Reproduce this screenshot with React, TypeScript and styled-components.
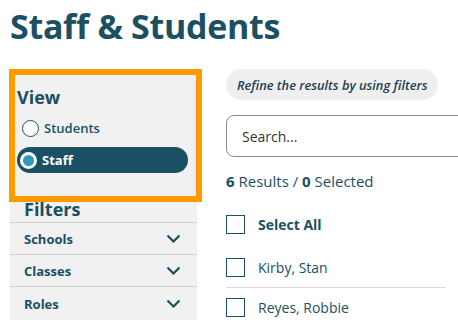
import { useState } from "react";
import styled, { createGlobalStyle } from "styled-components";

const TEAL = "#1b4f62";

const GlobalStyle = createGlobalStyle`
  html, body {
    margin: 0;
    padding: 0;
    background: #fff;
    overflow: hidden;
  }
  body {
    font-family: "Open Sans", "Noto Sans", sans-serif;
    color: ${TEAL};
  }
`;

// STYLED COMPONENTS
const Page = styled.div`
  box-sizing: border-box;
  padding: 6px 0 0 10px;
  width: 458px;
  height: 329px;
  overflow: hidden;
`;

const Title = styled.h1`
  margin: 0;
  font-size: 34px;
  font-weight: 700;
  line-height: 40px;
  color: ${TEAL};
  letter-spacing: -0.3px;
`;

const Layout = styled.div`
  display: flex;
  align-items: flex-start;
  gap: 29px;
  margin-top: 23px;
`;

const Sidebar = styled.aside`
  width: 187px;
  background: #f1f1f1;
  flex-shrink: 0;
`;

const ViewBox = styled.div`
  position: relative;
  z-index: 1;
  margin: 0 -5px 0 -1px;
  border: 6px solid #ff9900;
  background: #f1f1f1;
  padding: 9px 8px 23px 2px;
  display: flex;
  flex-direction: column;
`;

const SectionTitle = styled.h2`
  margin: 0;
  font-size: 18px;
  font-weight: 700;
  line-height: 26px;
  color: ${TEAL};
`;

const RadioRow = styled.label<{ $checked?: boolean }>`
  display: flex;
  align-items: center;
  gap: 5px;
  height: 26px;
  padding-left: ${(p) => (p.$checked ? "3px" : "5px")};
  margin-top: ${(p) => (p.$checked ? "6px" : "5px")};
  border-radius: 13px;
  background: ${(p) => (p.$checked ? TEAL : "transparent")};
  color: ${(p) => (p.$checked ? "#fff" : TEAL)};
  font-size: 13px;
  font-weight: ${(p) => (p.$checked ? 700 : 600)};
  cursor: pointer;
`;

const RadioDot = styled.span<{ $checked?: boolean }>`
  box-sizing: border-box;
  width: 17px;
  height: 17px;
  border-radius: 50%;
  background: ${(p) => (p.$checked ? "#3399bb" : "#fff")};
  border: ${(p) => (p.$checked ? "3px solid #fff" : `1.5px solid ${TEAL}`)};
  flex-shrink: 0;
`;

const FiltersTitle = styled(SectionTitle)`
  margin-top: -5px;
  padding-left: 14px;
  line-height: 25px;
`;

const FilterRow = styled.button`
  display: flex;
  align-items: center;
  justify-content: space-between;
  width: 100%;
  height: 32px;
  padding: 0 16px 0 14px;
  border: none;
  border-top: 1px solid #cfcfcf;
  background: transparent;
  font-family: inherit;
  font-size: 13px;
  font-weight: 700;
  color: ${TEAL};
  cursor: pointer;
  &:last-child {
    height: 34px;
  }
`;

const Main = styled.main`
  flex: 1;
  min-width: 0;
  display: flex;
  flex-direction: column;
`;

const Hint = styled.div`
  align-self: flex-start;
  height: 31px;
  display: flex;
  align-items: center;
  padding: 0 11px;
  border-radius: 16px;
  background: #efefef;
  font-size: 12.8px;
  font-weight: 600;
  font-style: italic;
  color: #22404e;
`;

const SearchInput = styled.input`
  box-sizing: border-box;
  margin-top: 15px;
  width: 260px;
  flex-shrink: 0;
  height: 42px;
  padding: 0 15px;
  border: 1px solid #8c8c8c;
  border-radius: 8px;
  font-family: inherit;
  font-size: 14px;
  color: #333;
  outline: none;
  &::placeholder {
    color: #333;
  }
`;

const Summary = styled.div`
  margin-top: 14px;
  font-size: 15px;
  line-height: 20px;
  color: ${TEAL};
  b {
    font-weight: 700;
  }
`;

const List = styled.ul`
  list-style: none;
  margin: 14px 0 0;
  padding: 0;
  width: 220px;
`;

const Item = styled.li<{ $divider?: boolean; $bold?: boolean; $gapTop?: number }>`
  display: flex;
  align-items: center;
  gap: 13px;
  height: 39px;
  margin-top: ${(p) => p.$gapTop ?? 0}px;
  border-top: ${(p) => (p.$divider ? "1.5px solid #d8d8d8" : "none")};
  font-size: 14px;
  font-weight: ${(p) => (p.$bold ? 700 : 400)};
  color: ${TEAL};
`;

const Box = styled.span`
  box-sizing: border-box;
  width: 19px;
  height: 19px;
  border: 1.5px solid ${TEAL};
  background: #fff;
  flex-shrink: 0;
`;

function Chevron() {
  return (
    <svg width="15" height="9" viewBox="0 0 15 9" fill="none">
      <path d="M1.5 1.5L7.5 7.5L13.5 1.5" stroke={TEAL} strokeWidth="2.2" />
    </svg>
  );
}

export default function App() {
  const [view, setView] = useState<"students" | "staff">("staff");

  return (
    <Page>
      <GlobalStyle />
      <Title>Staff &amp; Students</Title>
      <Layout>
        <Sidebar>
          <ViewBox>
            <SectionTitle>View</SectionTitle>
            <RadioRow $checked={view === "students"} onClick={() => setView("students")}>
              <RadioDot $checked={view === "students"} />
              Students
            </RadioRow>
            <RadioRow $checked={view === "staff"} onClick={() => setView("staff")}>
              <RadioDot $checked={view === "staff"} />
              Staff
            </RadioRow>
          </ViewBox>
          <FiltersTitle>Filters</FiltersTitle>
          {["Schools", "Classes", "Roles"].map((f) => (
            <FilterRow key={f}>
              {f}
              <Chevron />
            </FilterRow>
          ))}
        </Sidebar>
        <Main>
          <Hint>Refine the results by using filters</Hint>
          <SearchInput placeholder="Search..." />
          <Summary>
            <b>6</b> Results / <b>0</b> Selected
          </Summary>
          <List>
            <Item $bold>
              <Box />
              Select All
            </Item>
            <Item $gapTop={4}>
              <Box />
              Kirby, Stan
            </Item>
            <Item $divider>
              <Box />
              Reyes, Robbie
            </Item>
          </List>
        </Main>
      </Layout>
    </Page>
  );
}
